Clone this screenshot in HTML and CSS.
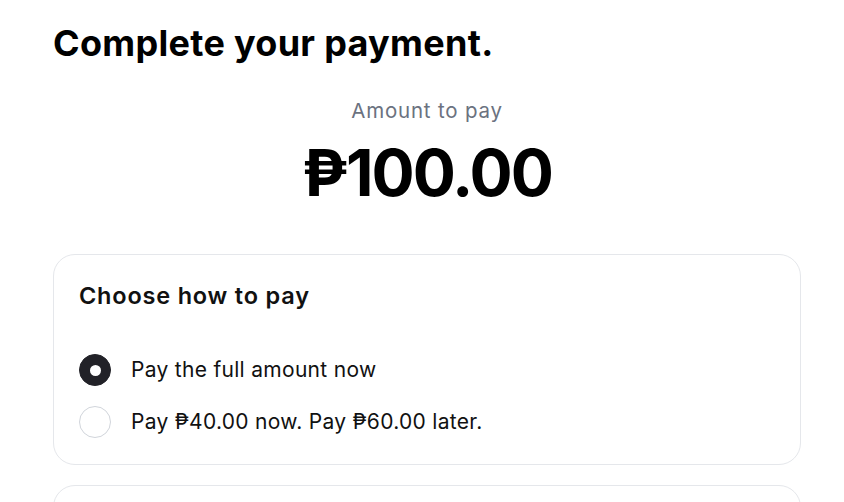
FILE: index.html
```html
<!DOCTYPE html>
<html lang="en">
<head>
    <meta charset="UTF-8">
    <meta name="viewport" content="width=device-width, initial-scale=1.0">
    <title>Complete your payment</title>
    <link rel="stylesheet" href="styles.css">
</head>
<body>
    <div class="page">
        <h1>Complete your payment.</h1>
        <div class="amount">
            <div class="amount-label">Amount to pay</div>
            <div class="amount-value">₱100.00</div>
        </div>
        <div class="card">
            <h2>Choose how to pay</h2>
            <div class="options">
                <label class="option">
                    <span class="radio checked"></span>
                    <span>Pay the full amount now</span>
                </label>
                <label class="option">
                    <span class="radio"></span>
                    <span>Pay ₱40.00 now. Pay ₱60.00 later.</span>
                </label>
            </div>
        </div>
        <div class="card"></div>
    </div>
</body>
</html>
```

FILE: styles.css
```css
body {
    margin: 0;
    background: #fff;
    font-family: Inter, "Noto Sans", sans-serif;
    color: #111;
}
.page {
    padding: 21px 43px 0 53px;
}
h1 {
    margin: 0;
    font-size: 36px;
    font-weight: 700;
    line-height: 44px;
    color: #000;
    letter-spacing: 0.3px;
}
.amount {
    text-align: center;
    margin-top: 32px;
}
.amount-label {
    font-size: 20.5px;
    line-height: 28px;
    color: #6b7280;
    letter-spacing: 0.8px;
}
.amount-value {
    margin-top: 10px;
    font-size: 64px;
    font-weight: 700;
    line-height: 76px;
    color: #000;
    letter-spacing: -2px;
}
.card {
    border: 1px solid #e5e7eb;
    border-radius: 22px;
    padding: 26px 26px 26px 25px;
    margin-top: 43px;
    background: #fff;
}
.card + .card {
    margin-top: 20px;
    height: 60px;
}
h2 {
    margin: 0;
    font-size: 23.5px;
    font-weight: 600;
    line-height: 30px;
    letter-spacing: 0.8px;
}
.options {
    margin-top: 43px;
    display: flex;
    flex-direction: column;
    gap: 20px;
}
.option {
    display: flex;
    align-items: center;
    gap: 20px;
    font-size: 21px;
    line-height: 32px;
    letter-spacing: 0.3px;
}
.radio {
    width: 30px;
    height: 30px;
    border-radius: 50%;
    border: 1px solid #d1d5db;
    background: #fff;
    position: relative;
    flex: none;
}
.radio.checked {
    background: #222228;
    border-color: #222228;
}
.radio.checked::after {
    content: "";
    position: absolute;
    left: 9.5px;
    top: 9.5px;
    width: 11px;
    height: 11px;
    border-radius: 50%;
    background: #fff;
}
```
